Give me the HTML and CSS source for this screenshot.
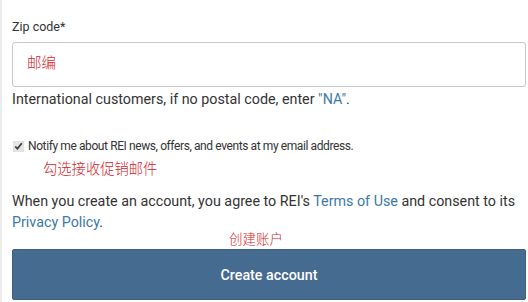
FILE: index.html
```html
<!DOCTYPE html>
<html lang="en">
<head>
    <meta charset="UTF-8">
    <meta name="viewport" content="width=device-width, initial-scale=1.0">
    <title>Create account</title>
    <link rel="stylesheet" href="styles.css">
</head>
<body>
    <div class="form-panel">
        <div class="field">
            <label class="field-label" for="zip">Zip code*</label>
            <div class="text-input" id="zip">
                <span class="note">邮编</span>
            </div>
            <div class="help-text">International customers, if no postal code, enter <a href="#" class="link">"NA"</a>.</div>
        </div>

        <div class="optin">
            <label class="optin-row">
                <input type="checkbox" class="optin-box" checked>
                <span>Notify me about REI news, offers, and events at my email address.</span>
            </label>
            <div class="note optin-note">勾选接收促销邮件</div>
        </div>

        <p class="legal">When you create an account, you agree to REI's <a href="#" class="link">Terms of Use</a> and consent to its <a href="#" class="link">Privacy Policy</a>.</p>

        <div class="note submit-note">创建账户</div>
        <button class="button">Create account</button>
    </div>
</body>
</html>
```

FILE: styles.css
```css
body {
    margin: 0;
    font-family: Roboto, "Liberation Sans", "Noto Sans CJK SC", sans-serif;
    color: #333;
    background: #fff;
}
.form-panel {
    border-left: 2px solid #ececec;
    padding: 18px 2px 0 10px;
    height: 302px;
    box-sizing: border-box;
}
.field-label {
    display: block;
    font-size: 12.5px;
    line-height: 18px;
    color: #333;
}
.text-input {
    margin-top: 6px;
    height: 45px;
    border: 1px solid #c8c8c8;
    border-radius: 3px;
    box-sizing: border-box;
    padding: 9px 14px;
}
.note {
    color: #d4232b;
    font-family: "Noto Sans CJK SC", sans-serif;
    font-weight: 300;
}
.text-input .note {
    font-size: 14.5px;
    line-height: 20px;
}
.help-text {
    font-size: 14.3px;
    line-height: 20px;
    margin-top: 2px;
}
.link {
    color: #3b78a8;
    text-decoration: none;
}
.optin {
    margin-top: 29px;
}
.optin-row {
    display: flex;
    align-items: center;
    font-size: 12px;
    line-height: 16px;
    letter-spacing: -0.4px;
}
.optin-box {
    margin: 0 4px 0 1px;
    width: 11px;
    height: 11px;
    accent-color: #e4e4e4;
}
.optin-note {
    font-size: 14.3px;
    line-height: 20px;
    margin: 4px 0 0 31px;
}
.legal {
    margin: 13px 0 0;
    font-size: 14.3px;
    line-height: 21px;
}
.submit-note {
    font-size: 13.5px;
    line-height: 18px;
    margin: -4px 0 0 217px;
}
.button {
    display: block;
    width: 100%;
    height: 51px;
    margin-top: 2px;
    font-family: Roboto, "Liberation Sans", sans-serif;
    font-size: 14.3px;
    font-weight: 500;
    color: #fff;
    background-color: #456b91;
    border: 1px solid #3c5f82;
    border-radius: 2px;
}
```
